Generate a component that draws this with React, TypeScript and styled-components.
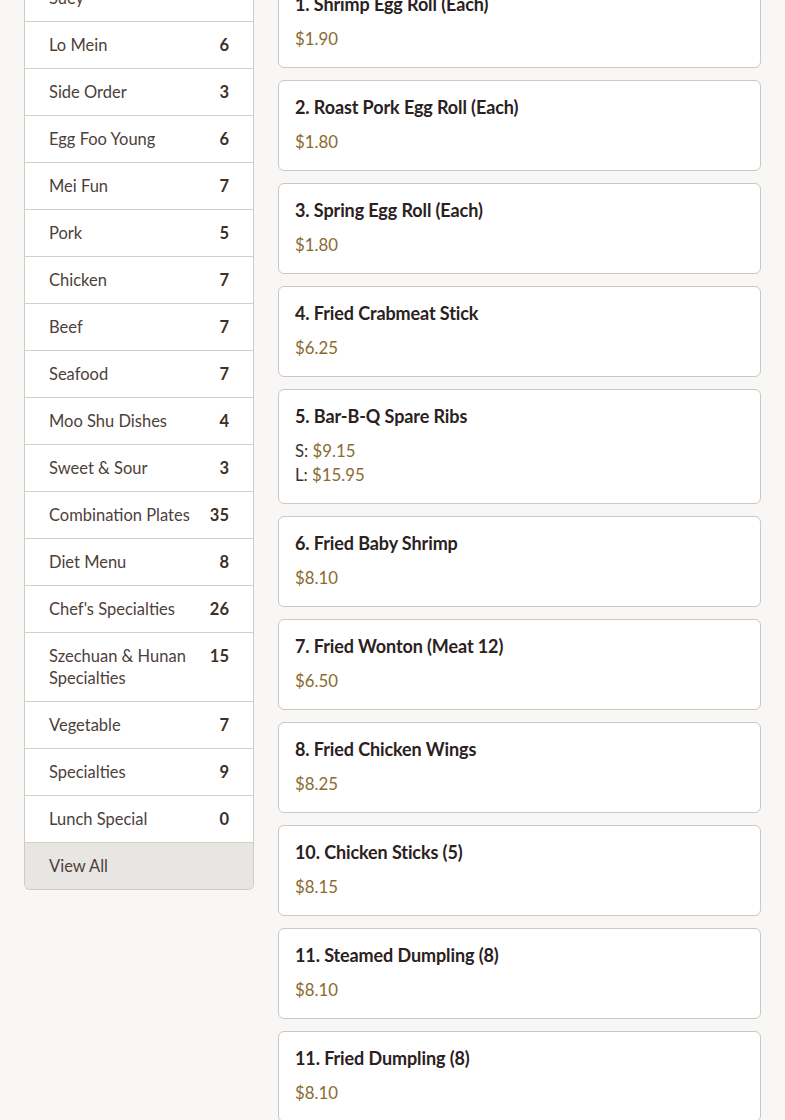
import React from 'react';
import styled, { createGlobalStyle } from 'styled-components';

const GlobalStyle = createGlobalStyle`
  html, body {
    margin: 0;
    padding: 0;
    overflow: hidden;
    background: #f8f7f5;
    font-family: Lato, "Noto Sans", "Liberation Sans", sans-serif;
  }
  * { box-sizing: border-box; }
`;

const Page = styled.main`
  display: grid;
  grid-template-columns: 230px 1fr;
  column-gap: 24px;
  align-items: start;
  padding: 0 24px;
  margin-top: -47px;
`;

const Sidebar = styled.nav`
  background: #fff;
  border: 1px solid #cfcbc7;
  border-top: none;
  border-radius: 0 0 6px 6px;
  overflow: hidden;
`;

const CatRow = styled.div<{ $muted?: boolean }>`
  display: flex;
  justify-content: space-between;
  align-items: flex-start;
  gap: 12px;
  padding: 12px 24px;
  border-top: 1px solid #d3cfcb;
  font-size: 16.5px;
  line-height: 22px;
  color: #4d3f3a;
  background: ${(p) => (p.$muted ? '#e8e6e3' : '#fff')};
  &:first-child { border-top: none; }
`;

const CatName = styled.span`
  flex: 1;
`;

const CatCount = styled.span`
  font-weight: 700;
  color: #3d302b;
`;

const Items = styled.section`
  display: flex;
  flex-direction: column;
  gap: 12px;
  padding-top: 24px;
`;

const Card = styled.article`
  background: #fff;
  border: 1px solid #cbc7c3;
  border-radius: 6px;
  padding: 16px;
  display: flex;
  flex-direction: column;
  gap: 13px;
`;

const Title = styled.h3`
  margin: 0;
  font-size: 18px;
  line-height: 20px;
  font-weight: 700;
  color: #2b211e;
  letter-spacing: -0.1px;
`;

const Prices = styled.div`
  display: flex;
  flex-direction: column;
  font-size: 16.8px;
  line-height: 24px;
  color: #3d302b;
`;

const Price = styled.span`
  color: #8a6a30;
`;

const categories: [string, number][] = [
  ['Chow Mein & Chop Suey', 8],
  ['Lo Mein', 6],
  ['Side Order', 3],
  ['Egg Foo Young', 6],
  ['Mei Fun', 7],
  ['Pork', 5],
  ['Chicken', 7],
  ['Beef', 7],
  ['Seafood', 7],
  ['Moo Shu Dishes', 4],
  ['Sweet & Sour', 3],
  ['Combination Plates', 35],
  ['Diet Menu', 8],
  ["Chef's Specialties", 26],
  ['Szechuan & Hunan Specialties', 15],
  ['Vegetable', 7],
  ['Specialties', 9],
  ['Lunch Special', 0],
];

type Item = { name: string; prices: { label?: string; value: string }[] };

const items: Item[] = [
  { name: '1. Shrimp Egg Roll (Each)', prices: [{ value: '$1.90' }] },
  { name: '2. Roast Pork Egg Roll (Each)', prices: [{ value: '$1.80' }] },
  { name: '3. Spring Egg Roll (Each)', prices: [{ value: '$1.80' }] },
  { name: '4. Fried Crabmeat Stick', prices: [{ value: '$6.25' }] },
  {
    name: '5. Bar-B-Q Spare Ribs',
    prices: [
      { label: 'S', value: '$9.15' },
      { label: 'L', value: '$15.95' },
    ],
  },
  { name: '6. Fried Baby Shrimp', prices: [{ value: '$8.10' }] },
  { name: '7. Fried Wonton (Meat 12)', prices: [{ value: '$6.50' }] },
  { name: '8. Fried Chicken Wings', prices: [{ value: '$8.25' }] },
  { name: '10. Chicken Sticks (5)', prices: [{ value: '$8.15' }] },
  { name: '11. Steamed Dumpling (8)', prices: [{ value: '$8.10' }] },
  { name: '11. Fried Dumpling (8)', prices: [{ value: '$8.10' }] },
  { name: '12. Boneless Spare Ribs', prices: [{ value: '$9.95' }] },
];

const App: React.FC = () => {
  return (
    <>
      <GlobalStyle />
      <Page>
        <Sidebar>
          {categories.map(([name, count]) => (
            <CatRow key={name}>
              <CatName>{name}</CatName>
              <CatCount>{count}</CatCount>
            </CatRow>
          ))}
          <CatRow $muted>
            <CatName>View All</CatName>
          </CatRow>
        </Sidebar>
        <Items>
          {items.map((item) => (
            <Card key={item.name}>
              <Title>{item.name}</Title>
              <Prices>
                {item.prices.map((p) => (
                  <span key={p.value}>
                    {p.label && `${p.label}: `}
                    <Price>{p.value}</Price>
                  </span>
                ))}
              </Prices>
            </Card>
          ))}
        </Items>
      </Page>
    </>
  );
};

export default App;
